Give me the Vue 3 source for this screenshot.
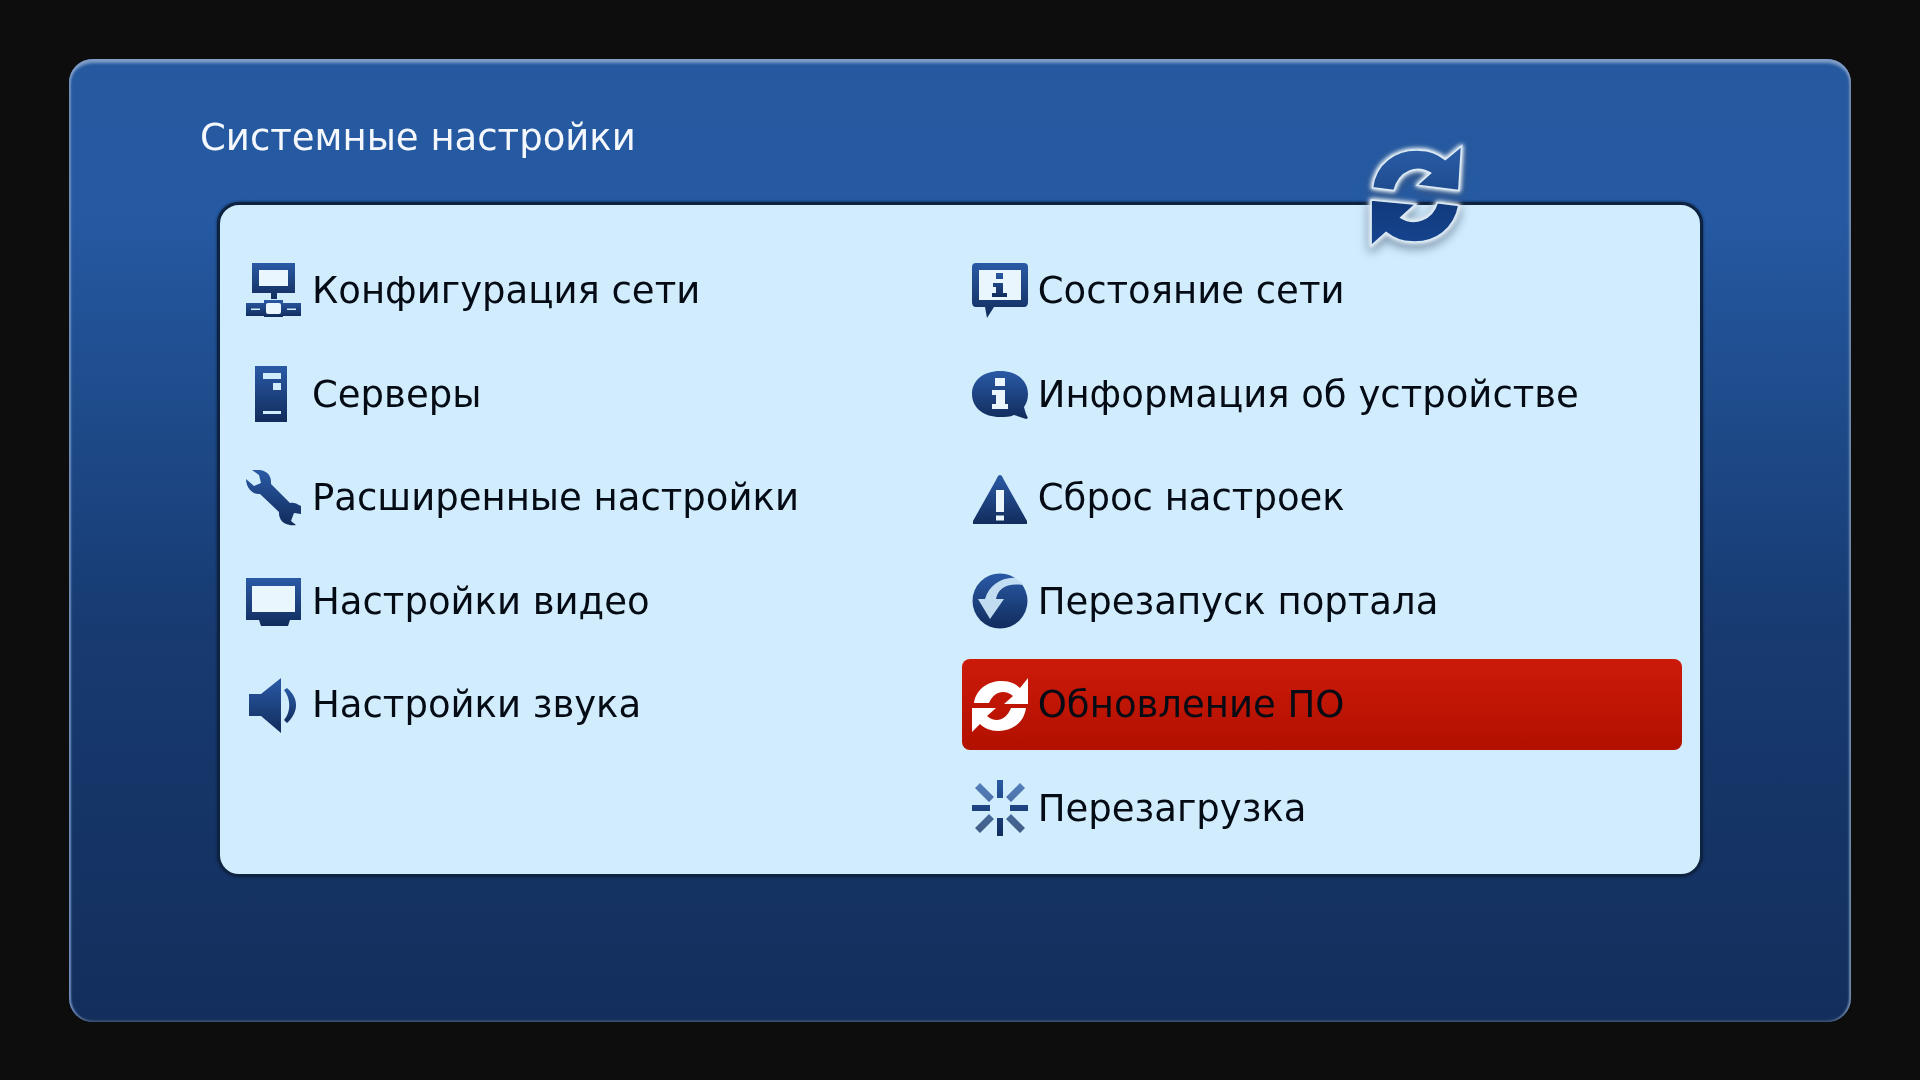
<script setup>
const leftItems = [
  { label: 'Конфигурация сети', icon: 'network' },
  { label: 'Серверы', icon: 'server' },
  { label: 'Расширенные настройки', icon: 'wrench' },
  { label: 'Настройки видео', icon: 'monitor' },
  { label: 'Настройки звука', icon: 'speaker' }
]
const rightItems = [
  { label: 'Состояние сети', icon: 'status' },
  { label: 'Информация об устройстве', icon: 'info' },
  { label: 'Сброс настроек', icon: 'warning' },
  { label: 'Перезапуск портала', icon: 'portal' },
  { label: 'Обновление ПО', icon: 'update', active: true },
  { label: 'Перезагрузка', icon: 'reboot' }
]
const columns = [leftItems, rightItems]
</script>

<template>
  <div class="screen">
    <div class="panel">
      <h1 class="title">Системные настройки</h1>
      <div class="content">
        <svg class="big-sync" viewBox="0 0 72 80">
          <defs>
            <linearGradient id="sync-top" x1="0" y1="0" x2="0" y2="1">
              <stop offset="0" stop-color="#2a5da6" />
              <stop offset="1" stop-color="#1f4c90" />
            </linearGradient>
            <linearGradient id="sync-bottom" x1="0" y1="0" x2="0" y2="1">
              <stop offset="0" stop-color="#123a7c" />
              <stop offset="1" stop-color="#15448e" />
            </linearGradient>
          </defs>
          <path fill="url(#sync-top)" stroke="#dbe9f4" stroke-width="1.2" d="M3 34 C5 16 20 5 38 6 C46 6 52 9 57 13 L69 3 L67 36 L36 32 L46 23 C36 17 23 21 19 36 Z" />
          <path fill="url(#sync-bottom)" stroke="#dbe9f4" stroke-width="1.2" d="M2 43 L35 46 L24 56 C34 62 47 58 51 45 L67 47 C64 64 50 75 32 74 C24 74 18 71 13 67 L2 77 Z" />
        </svg>
        <div class="columns">
          <div v-for="(col, i) in columns" :key="i" class="column">
            <div v-for="item in col" :key="item.label" class="row" :class="{ active: item.active }">
              <svg class="icon" viewBox="0 0 56 56">
                <defs>
                  <linearGradient :id="'g-' + item.icon" x1="0" y1="0" x2="0" y2="1">
                    <stop offset="0" stop-color="#2a5aa6" />
                    <stop offset="1" stop-color="#112c5c" />
                  </linearGradient>
                </defs>
                <g v-if="item.icon === 'network'" :fill="'url(#g-network)'">
                  <rect x="13" y="7" width="29" height="17" fill="#eaf6fe" />
                  <path fill-rule="evenodd" d="M6 0 H49 V30 H31 V36 H25 V30 H6 Z M13 7 V23 H42 V7 Z" />
                  <path fill-rule="evenodd" d="M0 40 H18 V37 H37 V40 H55 V53 H37 V54 H18 V53 H0 Z M5 45.5 V47 H14 V45.5 Z M41 45.5 V47 H50 V45.5 Z" />
                  <rect x="20" y="40" width="15" height="11" rx="2" fill="#eaf6fe" />
                </g>
                <g v-else-if="item.icon === 'server'" :fill="'url(#g-server)'">
                  <path fill-rule="evenodd" d="M9 0 H41 V56 H9 Z M17 7 V13 H35 V7 Z M27 17 V24 H35 V17 Z M17 45 V48 H35 V45 Z" />
                </g>
                <g v-else-if="item.icon === 'wrench'" :fill="'url(#g-wrench)'">
                  <path d="M0 9 L8 16 L15 13 L13 5 L6 0 C14 -1 22 1 24 7 C25 9 25 11 25 14 L44 33 C47 32 50 33 55 36 L55 44 L48 43 L45 51 L50 55 C44 56 36 54 34 48 C33 46 33 44 33 42 L14 24 C7 25 0 18 0 9 Z" />
                </g>
                <g v-else-if="item.icon === 'monitor'" :fill="'url(#g-monitor)'">
                  <rect x="6" y="12" width="44" height="28" fill="#eaf6fe" />
                  <path fill-rule="evenodd" d="M0 5 H55 V47 H44 L42 53 H15 L13 47 H0 Z M6 13 V39 H49 V13 Z" />
                </g>
                <g v-else-if="item.icon === 'speaker'" :fill="'url(#g-speaker)'">
                  <path d="M3 17 H15 L35 1 V56 L15 39 H3 Z" />
                  <path d="M38 13 L41 11 C53 21 53 35 41 46 L38 43 C45 35 45 22 38 13 Z" />
                </g>
                <g v-else-if="item.icon === 'status'" :fill="'url(#g-status)'">
                  <rect x="6" y="6" width="44" height="32" fill="#eaf6fe" />
                  <path fill-rule="evenodd" d="M4 0 H52 Q56 0 56 4 V39 Q56 44 52 44 H22 L15 55 L13 44 H4 Q0 44 0 39 V4 Q0 0 4 0 Z M7 7 V37 H49 V7 Z" />
                  <path d="M24 10 H31 V16 H24 Z M21 20 H31 V30 H35 V34 H20 V30 H24 V24 H21 Z" />
                </g>
                <g v-else-if="item.icon === 'info'">
                  <path fill="url(#g-info)" d="M28 5 C44 5 56 14 56 28 C56 34 54 38 52 41 C53 46 55 50 56 52 L54 53 C50 52 46 50 42 49 C38 51 33 51 28 51 C12 51 0 42 0 28 C0 14 12 5 28 5 Z" />
                  <path fill="#eaf5fd" d="M23 12 H33 V20 H23 Z M20 24 H33 V38 H36 V43 H20 V38 H24 V29 H20 Z" />
                </g>
                <g v-else-if="item.icon === 'warning'">
                  <path fill="url(#g-warning)" d="M28 5 C30 5 31 8 32 10 L55 51 V54 H1 V51 L24 10 C25 8 26 5 28 5 Z" />
                  <path fill="#eaf5fd" d="M24 20 H32 V42 H24 Z M24 45.5 H32 V50.5 H24 Z" />
                </g>
                <g v-else-if="item.icon === 'portal'">
                  <circle cx="28" cy="28" r="27.5" fill="url(#g-portal)" />
                  <path fill="#d4edfc" d="M46 5 C30 3 17 12 13 26 L6 26 L18 46 L32 26 L24 26 C26 16 34 10 50 12 Z" opacity=".9" />
                </g>
                <g v-else-if="item.icon === 'update'">
                  <path fill="#fff" d="M2 26 C4 12 16 4 30 4 C38 4 44 7 48 11 L56 1 V27 H32 L41 19 C33 12 22 14 17 26 Z M0 31 H24 L15 39 C23 46 34 44 39 31 L54 31 C52 46 40 54 26 54 C18 54 12 51 8 47 L0 55 Z" />
                </g>
                <g v-else :fill="'url(#g-reboot)'">
                  <path d="M25 0 H31 V18 H25 Z M25 38 H31 V56 H25 Z M0 25 H18 V31 H0 Z M38 25 H56 V31 H38 Z" />
                  <path opacity=".75" d="M3 8 L8 3 L22 17 L17 22 Z M34 17 L48 3 L53 8 L39 22 Z M17 34 L22 39 L8 53 L3 48 Z M39 34 L53 48 L48 53 L34 39 Z" />
                </g>
              </svg>
              <span class="label">{{ item.label }}</span>
            </div>
          </div>
        </div>
      </div>
    </div>
  </div>
</template>

<style scoped>
.screen {
  width: 1920px;
  height: 1080px;
  background: #0d0d0d;
  padding: 59px 69px;
  box-sizing: border-box;
  font-family: "DejaVu Sans", sans-serif;
  filter: blur(0.7px);
}
.panel {
  width: 1782px;
  height: 963px;
  box-sizing: border-box;
  border-radius: 24px;
  background: linear-gradient(#25599f 0, #255aa3 15%, #173a70 60%, #132e5c 100%);
  box-shadow: inset 0 5px 3px -1px #7f9dc6, inset 3px 0 2px -1px #6e8fbd, inset -3px 0 2px -1px #6f89ad, inset 0 -3px 2px -1px #34496c;
  padding: 55px 148px 0;
}
.title {
  margin: 0 0 40px -17px;
  font-size: 37px;
  font-weight: 400;
  line-height: 48px;
  color: #f4f8fc;
}
.content {
  position: relative;
  height: 675px;
  box-sizing: border-box;
  border-radius: 22px;
  border: 3px solid #0e2341;
  box-shadow: 0 0 3px #0e2341;
  background: #d1ecfd;
  padding: 40px 18px 0 16px;
}
.big-sync {
  position: absolute;
  top: -63px;
  left: 1147px;
  width: 100px;
  height: 108px;
  filter: drop-shadow(0 0 2px #e6f1f8) drop-shadow(0 0 2px #dbeaf5) drop-shadow(0 4px 5px rgba(60, 80, 110, 0.6));
}
.columns {
  display: flex;
}
.column {
  display: flex;
  flex-direction: column;
  gap: 12.5px;
  width: 726.5px;
}
.column:last-child {
  width: 721px;
}
.row {
  display: flex;
  align-items: center;
  gap: 10px;
  height: 91px;
  padding-left: 10px;
  border-radius: 8px;
  font-size: 37px;
  color: #050b14;
}
.row.active {
  background: linear-gradient(#cc1a0a, #b21000);
}
.icon {
  width: 56px;
  height: 56px;
  flex: none;
}
</style>
